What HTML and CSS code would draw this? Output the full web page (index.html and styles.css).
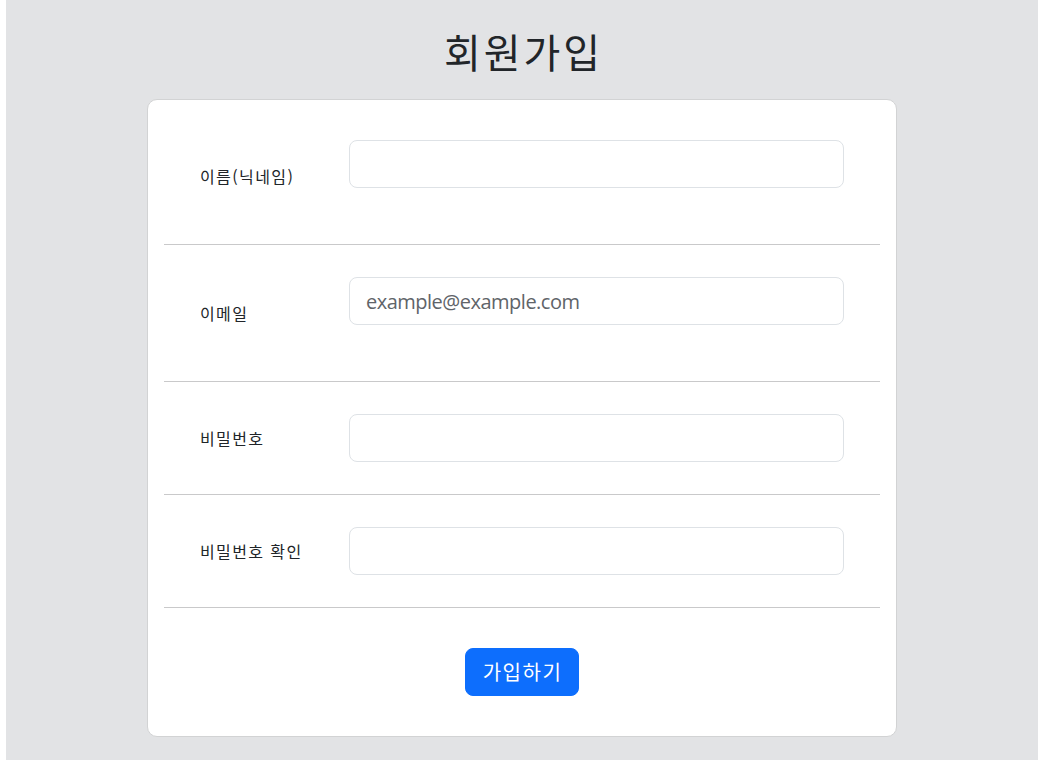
FILE: index.html
```html
<!DOCTYPE html>
<html lang="ko">
<head>
<meta charset="utf-8">
<title>회원가입</title>
<link rel="stylesheet" href="styles.css">
</head>
<body>
<div class="page">
  <h1 class="title">회원가입</h1>
  <form class="card">
    <div class="row">
      <label class="label" for="nick">이름(닉네임)</label>
      <div class="field">
        <input class="input" id="nick" type="text">
        <div class="feedback"></div>
      </div>
    </div>
    <hr class="divider">
    <div class="row">
      <label class="label" for="email">이메일</label>
      <div class="field">
        <input class="input" id="email" type="email" placeholder="example@example.com">
        <div class="feedback"></div>
      </div>
    </div>
    <hr class="divider">
    <div class="row">
      <label class="label" for="pw">비밀번호</label>
      <div class="field">
        <input class="input" id="pw" type="password">
      </div>
    </div>
    <hr class="divider">
    <div class="row">
      <label class="label" for="pw2">비밀번호 확인</label>
      <div class="field">
        <input class="input" id="pw2" type="password">
      </div>
    </div>
    <hr class="divider">
    <div class="actions">
      <button class="btn" type="button">가입하기</button>
    </div>
  </form>
</div>
</body>
</html>
```
FILE: styles.css
```css
* { box-sizing: border-box; }
html, body { margin: 0; padding: 0; background: #ffffff; }
body {
  font-family: "Noto Sans CJK KR", "Noto Sans", sans-serif;
  color: #212529;
}
.page {
  margin-left: 6px;
  width: 1032px;
  min-height: 760px;
  background: #e2e3e5;
  padding-top: 27px;
  padding-bottom: 20px;
}
.title {
  margin: 0 0 24px;
  text-align: center;
  font-size: 40px;
  line-height: 48px;
  font-weight: 400;
  letter-spacing: 3px;
  text-indent: 3px;
  color: #212529;
}
.card {
  display: block;
  width: 750px;
  margin: 0 auto;
  background: #ffffff;
  border: 1px solid #d2d3d4;
  border-radius: 10px;
  padding: 8px 16px;
}
.row {
  display: grid;
  grid-template-columns: 149px 1fr;
  align-items: center;
  padding: 32px 36px;
}
.label {
  font-size: 16px;
  line-height: 24px;
  letter-spacing: 1.4px;
  color: #212529;
}
.field { display: flex; flex-direction: column; }
.input {
  display: block;
  width: 100%;
  height: 48px;
  padding: 8px 16px;
  font-family: "Open Sans", "Noto Sans CJK KR", sans-serif;
  font-size: 20px;
  line-height: 30px;
  letter-spacing: -0.5px;
  color: #212529;
  background: #ffffff;
  border: 1px solid #dee2e6;
  border-radius: 8px;
  outline: none;
}
.input::placeholder { color: #5f6469; opacity: 1; }
.feedback { height: 24px; }
.divider {
  margin: 0;
  border: 0;
  border-top: 1px solid #c9c9ca;
}
.actions {
  display: flex;
  justify-content: center;
  padding: 40px 0 32px;
}
.btn {
  height: 48px;
  padding: 8px 16px 8px 17px;
  font-family: "Noto Sans CJK KR", sans-serif;
  font-size: 20px;
  line-height: 30px;
  letter-spacing: 1.5px;
  color: #ffffff;
  background: #0d6efd;
  border: 1px solid #0d6efd;
  border-radius: 8px;
  cursor: pointer;
}
```
